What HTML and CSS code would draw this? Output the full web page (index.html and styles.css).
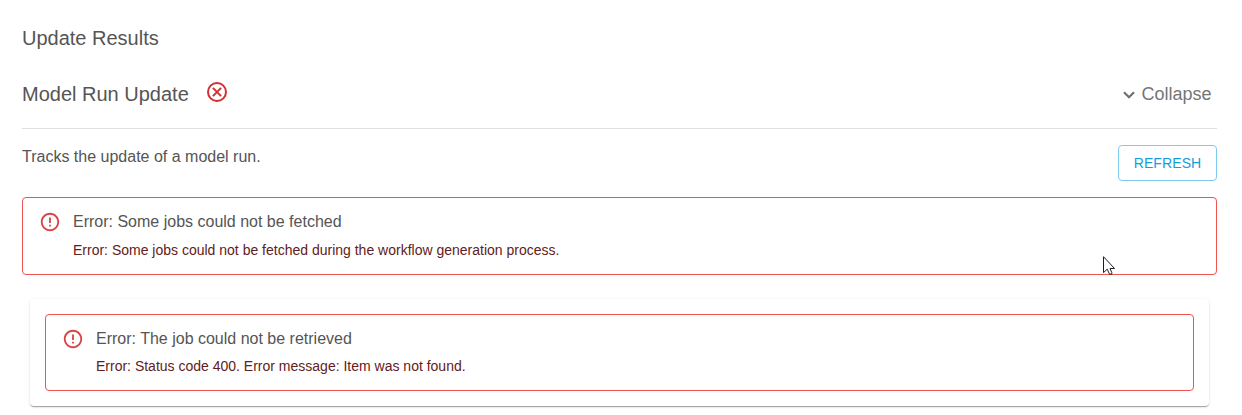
FILE: index.html
```html
<!DOCTYPE html>
<html lang="en">
<head>
<meta charset="utf-8">
<title>Update Results</title>
<link rel="stylesheet" href="styles.css">
</head>
<body>
<main class="page">
  <h1 class="title">Update Results</h1>
  <header class="section-header">
    <h2 class="title">Model Run Update</h2>
    <svg class="status-icon" viewBox="0 0 24 24"><circle cx="12" cy="12" r="9"/><path d="M7.9 7.9l8.2 8.2M16.1 7.9l-8.2 8.2"/></svg>
    <div class="collapse">
      <svg class="chevron" viewBox="0 0 12 8"><path d="M1 1.2l5 5 5-5"/></svg>
      <span>Collapse</span>
    </div>
  </header>
  <div class="summary">
    <p class="description">Tracks the update of a model run.</p>
    <button class="refresh">REFRESH</button>
  </div>
  <section class="alert">
    <svg class="alert-icon" viewBox="0 0 24 24"><path d="M11 15h2v2h-2v-2zm0-8h2v6h-2V7zm.99-5C6.47 2 2 6.48 2 12s4.47 10 9.99 10C17.52 22 22 17.52 22 12S17.52 2 11.99 2zM12 20c-4.42 0-8-3.58-8-8s3.58-8 8-8 8 3.58 8 8-3.58 8-8 8z"/></svg>
    <div class="alert-content">
      <h3 class="alert-title">Error: Some jobs could not be fetched</h3>
      <p class="alert-text">Error: Some jobs could not be fetched during the workflow generation process.</p>
    </div>
  </section>
  <div class="card">
    <section class="alert alert-nested">
      <svg class="alert-icon" viewBox="0 0 24 24"><path d="M11 15h2v2h-2v-2zm0-8h2v6h-2V7zm.99-5C6.47 2 2 6.48 2 12s4.47 10 9.99 10C17.52 22 22 17.52 22 12S17.52 2 11.99 2zM12 20c-4.42 0-8-3.58-8-8s3.58-8 8-8 8 3.58 8 8-3.58 8-8 8z"/></svg>
      <div class="alert-content">
        <h3 class="alert-title">Error: The job could not be retrieved</h3>
        <p class="alert-text">Error: Status code 400. Error message: Item was not found.</p>
      </div>
    </section>
  </div>
</main>
<svg class="cursor" viewBox="0 0 13 20"><path d="M.5 .7V16.6L4.2 13.2L6.5 18.1H8.8V16.6L7 12.5H11.5Z"/></svg>
</body>
</html>
```

FILE: styles.css
```css
* { box-sizing: border-box; }

body {
  margin: 0;
  background: #fff;
  color: #555;
  font-family: "Liberation Sans", Arial, sans-serif;
}

h1, h2, h3, p { margin: 0; font-weight: 400; }

.page { min-height: 415px; padding: 26px 25px 0 22px; }

.title { font-size: 20px; line-height: 24px; }

.section-header {
  display: flex;
  align-items: center;
  height: 79px;
  padding-top: 10px;
  border-bottom: 1px solid #e0e0e0;
}

.status-icon {
  width: 24px;
  height: 24px;
  margin: -4px 0 0 16px;
  fill: none;
  stroke: #d32f2f;
  stroke-width: 2;
}

.collapse {
  display: flex;
  align-items: center;
  gap: 6px;
  margin-left: auto;
  padding-right: 5.5px;
  color: #757575;
  font-size: 18px;
  line-height: 24px;
}

.chevron {
  width: 12px;
  height: 8px;
  margin-top: 2px;
  fill: none;
  stroke: #707070;
  stroke-width: 2.2;
}

.summary {
  display: flex;
  justify-content: space-between;
  padding-top: 16px;
}

.description { padding-top: 2px; font-size: 16px; line-height: 20px; }

.refresh {
  width: 99px;
  height: 36px;
  padding: 0;
  border: 1px solid #80caee;
  border-radius: 4px;
  background: #fff;
  color: #159cdd;
  font: 14px "Liberation Sans", Arial, sans-serif;
  letter-spacing: 0.1px;
}

.alert {
  display: flex;
  height: 78px;
  margin-top: 16px;
  padding: 13px 16px;
  border: 1px solid #ef5350;
  border-radius: 4px;
}

.alert-icon {
  flex: none;
  width: 22px;
  height: 22px;
  margin-right: 12px;
  fill: #d94343;
}

.alert-title { font-size: 16px; line-height: 22px; }

.alert-text {
  margin-top: 7px;
  color: #5f2120;
  font-size: 14px;
  line-height: 20px;
}

.card {
  height: 107px;
  margin: 24px 8px 0;
  padding: 15px;
  border-radius: 4px;
  background: #fff;
  box-shadow: 0 2px 1px -1px rgba(0,0,0,.2), 0 1px 1px rgba(0,0,0,.14), 0 1px 3px rgba(0,0,0,.12);
}

.alert-nested { height: 77px; margin-top: 0; }
.alert-nested .alert-text { margin-top: 6px; }

.cursor {
  position: absolute;
  left: 1103px;
  top: 256px;
  width: 13px;
  height: 20px;
  fill: #fff;
  stroke: #1c1c26;
  stroke-width: 1;
}
```
